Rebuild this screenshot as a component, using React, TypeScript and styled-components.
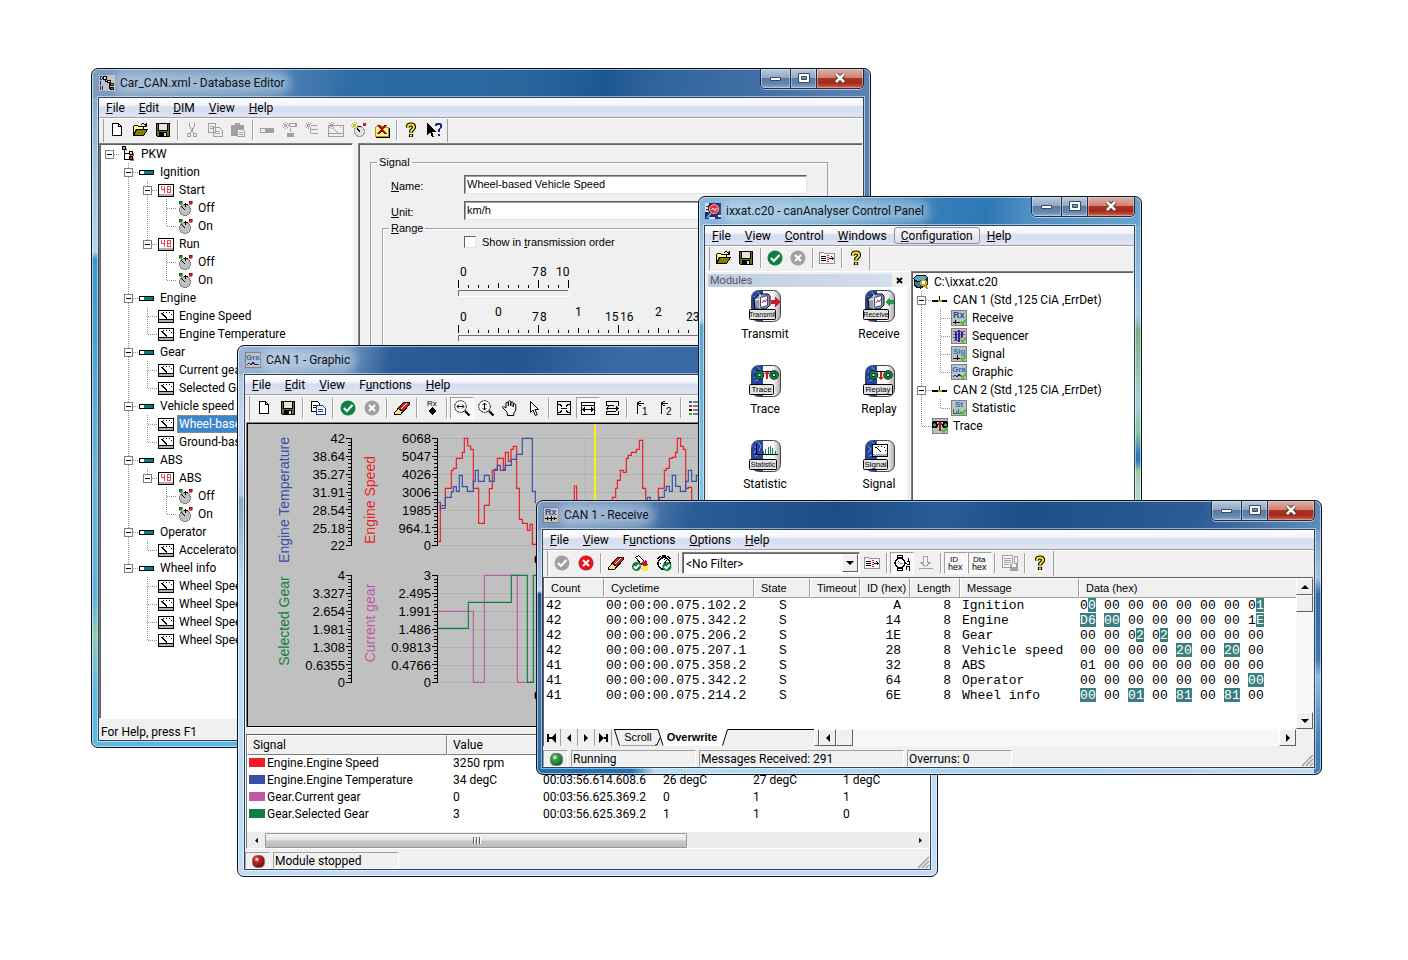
import React from 'react';
import styled, { createGlobalStyle, css } from 'styled-components';

const UI = 'Roboto, "Open Sans", sans-serif';
const SANS = '"Liberation Sans", Arial, sans-serif';
const MONO = '"Liberation Mono", "Courier New", monospace';

const GlobalStyle = createGlobalStyle`
  *, *::before, *::after { box-sizing: border-box; }
  body { margin: 0; background: #fff; color: #000; font: 12px/16px ${UI}; }
  button, input, select { font: inherit; color: inherit; }
  svg { display: block; flex: none; }
`;

/* ---------- Desktop and windows ---------- */

const Desktop = styled.main`
  position: relative;
  min-height: 100vh;
  overflow: hidden;
`;

interface Skin { title: string; left: string; right: string; bottom: string }
interface Place { x: number; y: number; w: number; h: number; edge?: number }

const Frame = styled.section<{ $place: Place; $skin: Skin }>`
  position: absolute;
  left: ${p => p.$place.x}px;
  top: ${p => p.$place.y}px;
  width: ${p => p.$place.w}px;
  height: ${p => p.$place.h}px;
  display: flex;
  flex-direction: column;
  padding: 0 6px 6px ${p => p.$place.edge || 6}px;
  overflow: hidden;
  border: 1px solid #0c1622;
  border-radius: 7px;
  background:
    ${p => p.$skin.title} 0 0 / 100% 29px no-repeat,
    ${p => p.$skin.left} 0 0 / 7px 100% no-repeat,
    ${p => p.$skin.right} 100% 0 / 7px 100% no-repeat,
    ${p => p.$skin.bottom};
  box-shadow: inset 0 0 0 1px rgba(255, 255, 255, 0.55);
`;

const TitleBar = styled.header`
  display: flex;
  flex: none;
  align-items: center;
  gap: 5px;
  height: 28px;
  padding-left: 1px;
`;

const TitleText = styled.h2`
  margin: 0;
  font-size: 12px;
  font-weight: 400;
  line-height: 12px;
  white-space: nowrap;
  color: #0a1420;
  border-radius: 6px;
  background: rgba(255, 255, 255, 0.36);
  box-shadow: 0 0 10px 6px rgba(255, 255, 255, 0.36);
`;

const Captions = styled.div`
  display: flex;
  align-self: flex-start;
  height: 20px;
  margin-left: auto;
  border: 1px solid #1d2f45;
  border-top: 0;
  border-radius: 0 0 5px 5px;
  box-shadow: 0 1px 0 rgba(255, 255, 255, 0.55);
  overflow: hidden;
`;

const CaptionButton = styled.button<{ $w: number; $close?: boolean }>`
  display: flex;
  align-items: center;
  justify-content: center;
  width: ${p => p.$w}px;
  padding: 0 0 2px;
  border: 0;
  border-left: ${p => (p.$w === 29 ? 0 : 1)}px solid #1d2f45;
  background: ${p => p.$close
    ? 'linear-gradient(#dcb0a8 0, #cf8577 45%, #b5301c 50%, #a32b20 75%, #d2684c 100%)'
    : 'linear-gradient(#b9c9dc 0, #8fa9c6 45%, #587ba4 50%, #6487af 80%, #8cb0d2 100%)'};
  box-shadow: inset 0 0 0 1px rgba(255, 255, 255, 0.35);
`;

const Client = styled.div`
  display: flex;
  flex: 1;
  flex-direction: column;
  min-height: 0;
  border: 1px solid #2f4458;
  box-shadow: 0 0 0 1px rgba(255, 255, 255, 0.5);
  background: #f0f0f0;
`;

const MenuBar = styled.nav`
  display: flex;
  flex: none;
  align-items: center;
  height: 20px;
  border-bottom: 1px solid #a0a0a0;
  background: linear-gradient(#fff 0, #f3f5fb 35%, #d5dcee 50%, #dfe4f4 100%);
`;

const MenuItem = styled.button<{ $hot?: boolean }>`
  height: 17px;
  padding: 1px 6px 0;
  border: 1px solid ${p => (p.$hot ? '#8a919e' : 'transparent')};
  border-radius: 3px;
  background: ${p => (p.$hot ? 'linear-gradient(#f6f7fb, #dcdfe9)' : 'none')};
  font-size: 12px;
  line-height: 15px;
`;

const ToolRow = styled.div<{ $h: number }>`
  display: flex;
  flex: none;
  height: ${p => p.$h}px;
  padding: 0 0 1px 4px;
  border-top: 1px solid #fff;
`;

const ToolGroup = styled.div`
  display: flex;
  align-items: center;
  padding: 0 1px 1px 2px;
  border-left: 1px solid #a0a0a0;
  border-right: 1px solid #a0a0a0;
`;

const ToolButton = styled.button<{ $w: number; $pressed?: boolean }>`
  display: flex;
  flex: none;
  align-items: center;
  justify-content: center;
  width: ${p => p.$w}px;
  height: 22px;
  padding: 0 1px 0 0;
  border: 1px solid transparent;
  background: none;
  ${p => p.$pressed && css`
    border-color: #a0a0a0 #fff #fff #a0a0a0;
    background: #f7f7f7;
  `}
`;

const Separator = styled.i`
  flex: none;
  width: 6px;
  height: 20px;
  border-left: 2px solid transparent;
  background: linear-gradient(90deg, #a0a0a0 50%, #fff 50%) 0 0 / 2px 100% no-repeat;
`;

const StatusBar = styled.footer<{ $h: number }>`
  display: flex;
  flex: none;
  align-items: flex-end;
  gap: 3px;
  height: ${p => p.$h}px;
`;

const StatusPane = styled.div<{ $w: number }>`
  display: flex;
  flex: none;
  align-items: center;
  width: ${p => p.$w}px;
  height: 17px;
  padding: 1px 0 0 1px;
  border: 1px solid;
  border-color: #a0a0a0 #fff #fff #a0a0a0;
  line-height: 14px;
  white-space: nowrap;
`;

const Lamp = styled.span<{ $color: string; $dark: string }>`
  width: 13px;
  height: 13px;
  margin-left: 5px;
  border: 1px solid #777;
  border-radius: 5px;
  background: radial-gradient(circle at 35% 30%, #fff 0, ${p => p.$color} 25%, ${p => p.$dark} 85%);
`;

const GripHolder = styled.span`
  margin-left: auto;
`;

/* ---------- Icons ---------- */

const gray = '#a0a0a0';
const Badge = ({ children }: { children: React.ReactNode }) => (
  <>
    <rect x=".5" y=".5" width="15" height="15" fill="#c0c0c0" stroke="#808080" />
    {children}
  </>
);
const Tick = ({ x = 0, y = 0 }) => (
  <path d={`M${x + 10} ${y + 12}l2 2 3-5`} fill="none" stroke="#4fc02c" strokeWidth="2" />
);
const Disc = ({ fill, cross, cx = 8, cy = 8, r = 7.5 }: { fill: string; cross?: boolean; cx?: number; cy?: number; r?: number }) => (
  <g shapeRendering="auto">
    <circle cx={cx} cy={cy} r={r} fill={fill} />
    {cross
      ? <path d={`M${cx - r * 0.4} ${cy - r * 0.4}l${r * 0.8} ${r * 0.8}m0 ${-r * 0.8}l${-r * 0.8} ${r * 0.8}`} stroke="#fff" strokeWidth="2" />
      : <path d={`M${cx - r * 0.55} ${cy}l${r * 0.4} ${r * 0.4} ${r * 0.75} ${-r * 0.8}`} fill="none" stroke="#fff" strokeWidth="2" />}
  </g>
);
const Eraser = () => (
  <g>
    <path d="M.500 12.500l9-10h6v2l-9 10h-6z" fill="#e0201c" stroke="#000" />
    <path d="M.500 12.500l4-4 4 3-2 3h-6z" fill="#ffe27a" stroke="#000" />
    <path d="M7 9l6-6" stroke="#fff" />
  </g>
);
const Glass = ({ vertical }: { vertical?: boolean }) => (
  <g fill="none" stroke="#000" shapeRendering="auto">
    <circle cx="6.500" cy="6.500" r="5.800" fill="#fff" strokeDasharray="2 .6" />
    <path d="M11 11l4.500 4.500" strokeWidth="2.200" />
    {vertical
      ? <path d="M6.500 3v7M4.500 5l2-2 2 2M4.500 8l2 2 2-2" />
      : <path d="M3 6.500h7M5 4.500l-2 2 2 2M8 4.500l2 2-2 2" />}
  </g>
);
const Spark = ({ x, y, c }: { x: number; y: number; c: string }) => (
  <path d={`M${x} ${y + 3.5}h7M${x + 3.5} ${y}v7M${x + 1} ${y + 1}l5 5m0-5l-5 5`} stroke={c} strokeDasharray="1 1" />
);
const smallText = { fontFamily: 'Liberation Sans', fontWeight: 700, shapeRendering: 'auto' } as const;
const hexText = { fontFamily: 'Liberation Sans', fontWeight: 400, shapeRendering: 'auto' } as const;

const ICONS: Record<string, React.ReactNode> = {
  new: <path d="M3.500 1.500h6l3 3v9h-9zM9.500 1.500v3h3" fill="#fff" stroke="#000" />,
  open: (
    <g stroke="#000">
      <path d="M1.500 13.500v-9l1-1h3l1 1h5v3" fill="#ffff7a" />
      <path d="M1.500 13.500l3-6h11l-4 6z" fill="#808000" />
      <path d="M9 2.500q3-2 5 1M14.500 1v3h-3" fill="none" />
    </g>
  ),
  save: (
    <g>
      <path d="M1.500 1.500h13v13h-12l-1-1z" fill="#6b6b1d" stroke="#000" />
      <path d="M4 2h8v6H4z" fill="#e4e4e4" />
      <path d="M3.500 1.500v6.500h9v-6.500" fill="none" stroke="#000" />
      <path d="M4 10h8v5H4z" />
      <path d="M9 11h2v3H9z" fill="#ddd" />
    </g>
  ),
  cut: <path d="M5.500 1v3l4 7M10.500 1v3l-4 7M3.500 11.500h3v3h-3zM9.500 11.500h3v3h-3z" fill="none" stroke={gray} />,
  copyOff: <path d="M1.500 1.500h7v9h-7zM3 4.500h4M3 6.500h4M6.500 5.500h6l3 3v6h-9zM8 9.500h5M8 11.500h5" fill="#f0f0f0" stroke={gray} />,
  copy: (
    <g>
      <path d="M1.500 1.500h6l2 2v8h-8zM3 5.500h4M3 7.500h4" fill="#fff" stroke="#000" />
      <path d="M6.500 5.500h6l3 3v6h-9zM8 9.500h5M8 11.500h5" fill="#fff" stroke="#1d3a8c" />
    </g>
  ),
  paste: (
    <g>
      <path d="M1 3h13v11H1zM5 1h5v2H5z" fill={gray} />
      <path d="M7.500 7.500h5l2 2v5h-7zM9 10.500h4M9 12.500h4" fill="#f0f0f0" stroke={gray} />
    </g>
  ),
  barOff: <g><path d="M1 6h14v5H1z" fill={gray} /><path d="M2 7h4v3H2z" fill="#f0f0f0" /></g>,
  addMux: <g><Spark x={0} y={0} c={gray} /><path d="M7 1h8v4H7zM5 11h7v4H5z" fill={gray} /><path d="M8 2h5v2H8z" fill="#f0f0f0" /><path d="M8.500 6v4" stroke={gray} /></g>,
  addList: <g><Spark x={0} y={0} c={gray} /><path d="M7 3.500h5M6 7.500h7M6 11.500h7M5.500 5v6" fill="none" stroke={gray} /></g>,
  addSignal: <g><path d="M.500 3.500h15v11h-15zM1 11.500h14M5 6l5 5M12 5.500h1" fill="none" stroke={gray} /><Spark x={0} y={0} c={gray} /></g>,
  addValue: (
    <g>
      <circle cx="8.500" cy="9.500" r="5" fill="#e4e4e4" stroke="#a0a0a0" />
      <path d="M6 6l3 4M7 4.500h3" stroke="#000" fill="none" />
      <path d="M12 1h3v3h-3z" fill="#d0201c" />
      <Spark x={0} y={0} c="#c9b800" />
    </g>
  ),
  remove: (
    <g>
      <path d="M1.500 5.500l2-2h4l1 2h6v9h-13z" fill="#fff38c" stroke="#a89a2a" />
      <path d="M2 15.500h13.500V6" fill="none" stroke="#000" />
      <path d="M4 3l8 9M12 3l-8 9" stroke="#9c1010" strokeWidth="2" />
    </g>
  ),
  help: (
    <g shapeRendering="auto">
      <path d="M5 5.500V4.500Q5 2.500 8 2.500T11 5Q11 6.500 9.500 7.500T8 10.500M8 12v3" fill="none" stroke="#000" strokeWidth="4.200" />
      <path d="M5 5.500V4.500Q5 2.500 8 2.500T11 5Q11 6.500 9.500 7.500T8 10M8 12.500v2" fill="none" stroke="#ffec00" strokeWidth="2" />
    </g>
  ),
  whatsThis: (
    <g>
      <path d="M1 1v12l3-3 2 5h2l-2-5h4z" />
      <path d="M9.500 4V3l1.500-1.500h3L15 3v2.500L12.500 8v2M12.500 11.500v2" fill="none" stroke="#20208a" strokeWidth="2" />
    </g>
  ),
  ok: <Disc fill="#138040" />,
  okOff: <Disc fill={gray} />,
  stop: <Disc fill="#e3171b" cross />,
  stopOff: <Disc fill={gray} cross />,
  eraser: <Eraser />,
  eraserOk: (
    <g>
      <path d="M3.500 2.500l3-2 6 6-3 3z" fill="#fff" stroke="#000" />
      <path d="M9 8l5-3 2 5-4 2z" fill="#c81414" />
      <path d="M10 11h6v5h-6z" fill="#ffe94a" />
      <Disc fill="#138040" cx={4.5} cy={11.5} r={4.5} />
    </g>
  ),
  clockOk: (
    <g>
      <circle cx="8" cy="8.500" r="6" fill="#fff" stroke="#000" strokeWidth="1.500" />
      <path d="M6 1h4M8 1v2M1.500 4l3-3M14.500 4l-3-3" stroke="#000" strokeWidth="2" />
      <path d="M8 9l3-4M4 8.500h1M8.500 4v1" stroke="#000" />
      <Disc fill="#138040" cx={11} cy={11.5} r={4.5} />
    </g>
  ),
  rxDot: (
    <g>
      <text x="3" y="6" fontSize="8" {...hexText}>Rx</text>
      <path d="M8 7l4 4-4 4-4-4z" />
    </g>
  ),
  zoomX: <Glass />,
  zoomY: <Glass vertical />,
  hand: <path shapeRendering="auto" d="M4.500 11.500l-4-4q0-2 3.500.5V3q1.200-1.600 2.400 0V6 1.500q1.200-1.500 2.400 0V6 2.500q1.200-1.500 2.400 0V7 4.500q1.600-1.200 2.600 0v5.500l-2 3v2.500h-6.500v-2z" fill="#fff" stroke="#000" />,
  pointer: <path shapeRendering="auto" d="M4.500 1.500v11l2.500-2.500 2.300 5.500 2-.8-2.300-5.200h3.500z" fill="#fff" stroke="#000" />,
  fitOut: (
    <g fill="none" stroke="#000">
      <path d="M1.500 1.500h13v13h-13zM5 8.500h6" />
      <path d="M2 4.500h2l2 2M14 4.500h-2l-2 2M2 12.500h2l2-2M14 12.500h-2l-2-2" />
    </g>
  ),
  fitX: <g fill="none" stroke="#000"><path d="M1.500 2.500h13v12h-13zM1.500 5.500h13" /><path d="M3 9.500h10M5 7.500l-2 2 2 2M11 7.500l2 2-2 2" /></g>,
  fitOpen: <g fill="none" stroke="#000"><path d="M2.500 5V1.500h12v4M2.500 11v3.500h12v-4M2 5.500h8M3 11.500h9M2 8.500h12M4.500 6.500l-2 2 2 2M12 6.500l2 2-2 2" /></g>,
  mark1: <g><path d="M3.500 2v12M4 3.500h6M6.500 1l-3 2.500 3 2.500" fill="none" stroke="#000" /><text x="8" y="15" fontSize="10" {...hexText}>1</text></g>,
  mark2: <g><path d="M3.500 2v12M4 3.500h6M6.500 1l-3 2.500 3 2.500" fill="none" stroke="#000" /><text x="8" y="15" fontSize="10" {...hexText}>2</text></g>,
  legend: (
    <g>
      <path d="M1 1h3v2H1z" fill="#2b5fc0" /><path d="M1 5h3v2H1z" fill="#e0201c" /><path d="M1 9h3v2H1z" /><path d="M1 13h3v2H1z" fill="#46a82c" />
      <path d="M5 2h10M5 6h10M5 10h10M5 14h10" stroke="#808080" strokeWidth="2" />
    </g>
  ),
  filter: (
    <g>
      <path d="M.500 13.500v-11h4l1 1h10v10z" fill="#f6f6f6" stroke="#909090" />
      <path d="M2 6.500h5M2 8.500h5M2 10.500h5M10 8.500h5M12.500 6.500l2 2-2 2" fill="none" stroke="#000" />
      <path d="M8.500 5v7" stroke="#e0201c" strokeWidth="2" strokeDasharray="1 1" />
    </g>
  ),
  watch: (
    <g>
      <path d="M3.500.500h5v2h-5zM3.500 13.500h5v2h-5z" fill="#fff" stroke="#000" />
      <circle cx="6" cy="8" r="5" fill="#fff" stroke="#000" strokeWidth="1.500" />
      <path d="M4 6l2 2h3" fill="none" stroke="#2b9fb8" />
      <path d="M11 8.500h2M14.500 3v3M12.500 6.500h3v3h-3M12.500 15v-3.500h3v4" fill="none" stroke="#000" />
    </g>
  ),
  download: <path d="M5.500 1.500h4v6h3l-5 4-5-4h3zM1 13.500h14" fill="#f6f6f6" stroke={gray} />,
  idHex: <g><text x="2" y="7" fontSize="8" {...hexText}>ID</text><text x="0" y="15" fontSize="9" {...hexText}>hex</text></g>,
  dataHex: <g><text x="1" y="7" fontSize="8" {...hexText}>Dta</text><text x="0" y="15" fontSize="9" {...hexText}>hex</text></g>,
  logOff: <g><path d="M.500.500h10v12h-10zM2 3.500h7M2 5.500h7M2 7.500h7M2 9.500h5M12.500 1.500h3v7h-3z" fill="#f6f6f6" stroke={gray} /><path d="M8 9h8v7H8z" fill={gray} /><path d="M10 9h4v3h-4z" fill="#f6f6f6" /></g>,

  /* tree */
  project: (
    <g>
      <path d="M4.500 3v10h5M5 7.500h4" fill="none" stroke="#000" />
      <path d="M2.500.500h3v3h-3z" fill="#40c8c8" stroke="#000" />
      <path d="M9.500 5.500h3v3h-3z" fill="#ffe94a" stroke="#000" />
      <path d="M9.500 10.500h3v3h-3z" fill="#e0201c" stroke="#000" />
      <path d="M6.500 2v3M13.500 7v3M13.500 12v3M10 9.500h3M10 14.500h3" stroke="#808080" />
    </g>
  ),
  bar: <g><path d="M.500 6.500h14v4H.500z" fill="#008080" stroke="#000" /><path d="M1 7h4v3H1z" fill="#fff" /></g>,
  digits: (
    <g>
      <path d="M.500 2.500h15v12h-15z" fill="#fff" stroke="#000" />
      <path d="M1 12h14v2H1z" fill="#b0b0b0" />
      <path d="M3.500 4v3h3M6.500 4v7M9.500 4.500h3v3h-3zM9.500 7.500v3h3v-3" fill="none" stroke="#ee4a46" />
    </g>
  ),
  meter: (
    <g>
      <path d="M.500 2.500h15v12h-15z" fill="#fff" stroke="#000" />
      <path d="M1 12h14v2H1z" fill="#b0b0b0" />
      <path d="M1 11.500h14" stroke="#000" />
      <path d="M4 5.500l5 5" stroke="#000" />
      <path d="M3 5.500h1M5 4.500h1M8 4.500h1M11 4.500h1M13 6.500h1" stroke="#000" />
    </g>
  ),
  knob: (
    <g>
      <circle cx="8" cy="10" r="5.500" fill="#c0c0c0" stroke="#808080" />
      <path d="M4 6l4 4M7 4.500h4M8.500 3v4" stroke="#000" strokeWidth="1.300" />
      <path d="M2 1h3v3H2z" fill="#2c8a1c" stroke="#103c08" strokeWidth=".5" />
      <path d="M12 1h3v3h-3z" fill="#d0201c" stroke="#500" strokeWidth=".5" />
    </g>
  ),
  disk: (
    <g>
      <ellipse cx="8" cy="4.500" rx="7" ry="3.500" fill="#58a8c8" stroke="#000" />
      <path d="M1.500 5v6q2 3 6 3V8Q3 8 1.500 5z" fill="#2d7a9c" stroke="#000" />
      <path d="M7 6l8-2v6l-3 3-5 1z" fill="#1d2a6e" />
      <circle cx="10.500" cy="8.500" r="2.500" fill="#fff" stroke="#c8a800" strokeWidth="2" />
      <path d="M11 11l4 4" stroke="#c8a800" strokeWidth="2" />
    </g>
  ),
  bus: <g><path d="M0 9h15" stroke="#000" strokeWidth="2" /><path d="M7.500 4v6" stroke="#000" /><path d="M6 8h4v2H6z" fill="#b0a800" /></g>,
  rx: <Badge><text x="2" y="8" fontSize="9" fill="#1d4fa0" {...smallText}>Rx</text><path d="M2 11.500h12M4.500 10v3M8 9v5M11.500 10v3" stroke="#000" /></Badge>,
  rxTick: <Badge><text x="2" y="8" fontSize="9" fill="#1d4fa0" {...smallText}>Rx</text><path d="M2 12.500h8M4.500 10v4" stroke="#000" /><Tick /></Badge>,
  seqTick: <Badge><path d="M2 3.500h12M2 6.500h12M2 9.500h10M3 12.500h6" stroke="#a02ca0" /><path d="M8 2v12M5 4v8M11 4v5" stroke="#20308c" strokeWidth="2" /><Tick /></Badge>,
  sigTick: <Badge><text x="2" y="8" fontSize="8" fill="#1d6fc0" {...smallText}>Sig</text><path d="M2 12.500h8M6.500 9v5" stroke="#000" /><Tick /></Badge>,
  graTick: <Badge><text x="1" y="8" fontSize="8" fill="#1d6fc0" {...smallText}>Gra</text><path d="M2 13l2-2 2 2 2-3 2 3" fill="none" stroke="#20208a" /><Tick /></Badge>,
  gra: <Badge><text x="1" y="8" fontSize="8" fill="#1d6fc0" {...smallText}>Gra</text><path d="M2 13l2-2 2 2 2-3 2 3 2-1 2 1" fill="none" stroke="#20208a" /></Badge>,
  stTick: <Badge><text x="4" y="7" fontSize="8" fill="#1d6fc0" {...smallText}>St</text><path d="M2.500 9v4.500H10M5.500 11v3M7.500 9v5" fill="none" stroke="#138040" /><Tick /></Badge>,
  traceTick: <Badge><path d="M1 3.500h14" stroke="#000" /><circle cx="2.500" cy="7" r="2.500" fill="#40a060" stroke="#000" strokeWidth="1.500" /><circle cx="13.500" cy="7" r="2.500" fill="#40a060" stroke="#000" strokeWidth="1.500" /><path d="M8 4v9M6 6h4" stroke="#a01414" strokeWidth="2" /><Tick /></Badge>,
  dim: (
    <g>
      <path d="M0 0h16v16H0z" fill="#c0c0c0" />
      <path d="M1 1.500h2M1.500 2v2M3.500 2v2M1 4.500h2M1.500 6v4M1.500 11v4M3.500 11v4" stroke="#20308c" fill="none" />
      <path d="M6.500 3v3h4v7h2" fill="none" stroke="#000" />
      <path d="M4.500 1.500h3v3h-3zM8.500 5.500h3v2h-3z" fill="#fff38c" stroke="#000" />
      <path d="M11.500 8.500h3v2h-3z" fill="#40c840" stroke="#000" /><path d="M11.500 12.500h3v2h-3z" fill="#e0201c" stroke="#000" />
    </g>
  ),
  analyser: (
    <g>
      <path d="M0 0h16v16H0z" fill="#1d2a6e" />
      <path d="M0 0h4v9H0zM4 14h6v2H4zM13 12h3v2h-3z" fill="#d8e0ee" />
      <path d="M1 3.500h4M1 6.500h4M3 2v6" stroke="#333" />
      <g shapeRendering="auto">
        <circle cx="9" cy="6" r="4.500" fill="#e83030" stroke="#f8b0b0" />
        <path d="M6.500 7l1.500-2 2 2.500 1.500-2.500" fill="none" stroke="#fff" />
        <path d="M6 10l-4 5" stroke="#70a8e0" strokeWidth="2" />
      </g>
    </g>
  ),
};

const Icon = ({ name }: { name: string }) => (
  <svg width="16" height="16" viewBox="0 0 16 16" shapeRendering="crispEdges" aria-hidden="true">{ICONS[name]}</svg>
);

const Grip = () => (
  <GripHolder>
    <svg width="14" height="14" viewBox="0 0 14 14" aria-hidden="true">
      <path d="M2 13L13 2M6 13l7-7M10 13l3-3" stroke="#a0a0a0" strokeWidth="1.500" />
    </svg>
  </GripHolder>
);

const Arrow = ({ dir }: { dir: 'left' | 'right' | 'up' | 'down' | 'first' | 'last' }) => {
  const d = {
    left: 'M7 1v8L3 5z', right: 'M3 1v8l4-4z', up: 'M1 7h8L5 3z', down: 'M1 3h8L5 7z',
    first: 'M9 0v10L4 5zM0 1h2v8H0zM2 4h3v2H2z', last: 'M1 0v10l5-5zM8 1h2v8H8zM5 4h3v2H5z',
  }[dir];
  return <svg width="10" height="10" viewBox="0 0 10 10" aria-hidden="true"><path d={d} /></svg>;
};

/* ---------- Window chrome components ---------- */

const Mnemonic = ({ text }: { text: string }) => {
  const i = text.indexOf('&');
  if (i < 0) return <>{text}</>;
  return <>{text.slice(0, i)}<u>{text[i + 1]}</u>{text.slice(i + 2)}</>;
};

interface WindowProps { place: Place; skin: Skin; icon: string; title: string; buttons?: boolean; children: React.ReactNode }

const AppWindow = ({ place, skin, icon, title, buttons = true, children }: WindowProps) => (
  <Frame $place={place} $skin={skin} aria-label={title}>
    <TitleBar>
      <Icon name={icon} />
      <TitleText>{title}</TitleText>
      {buttons && (
        <Captions>
          <CaptionButton $w={29} aria-label="Minimize">
            <svg width="13" height="9" viewBox="0 0 13 9"><path d="M1.500 4.500h10v3h-10z" fill="#fff" stroke="#3c4a5c" /></svg>
          </CaptionButton>
          <CaptionButton $w={26} aria-label="Maximize">
            <svg width="12" height="10" viewBox="0 0 12 10"><path d="M.500.500h11v9H.500zM3.500 3.500h5v3h-5z" fill="#fff" stroke="#3c4a5c" fillRule="evenodd" /></svg>
          </CaptionButton>
          <CaptionButton $w={47} $close aria-label="Close">
            <svg width="12" height="10" viewBox="0 0 12 10"><path d="M2 1l8 8M10 1L2 9" stroke="#4a3038" strokeWidth="4.500" /><path d="M2 1l8 8M10 1L2 9" stroke="#fff" strokeWidth="2.500" /></svg>
          </CaptionButton>
        </Captions>
      )}
    </TitleBar>
    <Client>{children}</Client>
  </Frame>
);

const Menu = ({ items, hot }: { items: string[]; hot?: string }) => (
  <MenuBar>
    {items.map(t => <MenuItem key={t} $hot={t === hot}><Mnemonic text={t} /></MenuItem>)}
  </MenuBar>
);

/* A tool list is a string of icon names; "|" is a separator and "!" marks a pressed button. */
const Tools = ({ list, w = 24 }: { list: string; w?: number }) => (
  <>
    {list.split(' ').map((t, i) => t === '|'
      ? <Separator key={i} />
      : <ToolButton key={i} $w={w} $pressed={t[0] === '!'} aria-label={t.replace('!', '')}><Icon name={t.replace('!', '')} /></ToolButton>)}
  </>
);

/* ---------- Tree ---------- */

const Tree = styled.ul`
  margin: 0;
  padding: 0;
  list-style: none;
`;

const TreeRow = styled.li`
  display: flex;
  height: 18px;
`;

const dotsV = 'repeating-linear-gradient(#909090 0 1px, transparent 1px 2px)';
const dotsH = 'repeating-linear-gradient(90deg, #909090 0 1px, transparent 1px 2px)';
const guideStyles: Record<string, string> = {
  '|': `${dotsV} 8px 0 / 1px 100% no-repeat`,
  T: `${dotsV} 8px 0 / 1px 100% no-repeat, ${dotsH} 9px 9px / 10px 1px no-repeat`,
  L: `${dotsV} 8px 0 / 1px 9px no-repeat, ${dotsH} 9px 9px / 10px 1px no-repeat`,
  r: `${dotsH} 9px 9px / 10px 1px no-repeat`,
};

const Guide = styled.span<{ $kind: string }>`
  flex: none;
  width: 19px;
  padding: 5px 0 0 4px;
  background: ${p => guideStyles[p.$kind] || 'none'};
`;

const Expander = styled.button`
  display: block;
  width: 9px;
  height: 9px;
  padding: 0;
  border: 1px solid #808080;
  background: linear-gradient(#000, #000) 1px 3px / 5px 1px no-repeat #fff;
`;

const TreeIcon = styled.span`
  flex: none;
  width: 19px;
  padding-top: 1px;
`;

const TreeLabel = styled.span<{ $selected?: boolean }>`
  padding: 0 2px;
  line-height: 18px;
  white-space: nowrap;
  ${p => p.$selected && css`
    color: #fff;
    background: #3d86cc;
    outline: 1px dotted #e8862c;
    outline-offset: -1px;
  `}
`;

type Node = [guides: string, icon: string, label: string];

const TreeView = ({ nodes, selected }: { nodes: Node[]; selected?: string }) => (
  <Tree>
    {nodes.map(([guides, icon, label], i) => {
      const open = guides.endsWith('+');
      const kinds = guides.replace('+', '').split('');
      return (
        <TreeRow key={i}>
          {kinds.map((k, j) => (
            <Guide key={j} $kind={k}>{open && j === kinds.length - 1 && <Expander aria-label="Collapse" />}</Guide>
          ))}
          <TreeIcon><Icon name={icon} /></TreeIcon>
          <TreeLabel $selected={label === selected}>{label}</TreeLabel>
        </TreeRow>
      );
    })}
  </Tree>
);

/* ---------- Database Editor ---------- */

const DB_NODES: Node[] = [
  ['r+', 'project', 'PKW'],
  [' T+', 'bar', 'Ignition'],
  [' |T+', 'digits', 'Start'],
  [' ||T', 'knob', 'Off'],
  [' ||L', 'knob', 'On'],
  [' |L+', 'digits', 'Run'],
  [' | T', 'knob', 'Off'],
  [' | L', 'knob', 'On'],
  [' T+', 'bar', 'Engine'],
  [' |T', 'meter', 'Engine Speed'],
  [' |L', 'meter', 'Engine Temperature'],
  [' T+', 'bar', 'Gear'],
  [' |T', 'meter', 'Current gear'],
  [' |L', 'meter', 'Selected Gear'],
  [' T+', 'bar', 'Vehicle speed'],
  [' |T', 'meter', 'Wheel-based Vehicle Speed'],
  [' |L', 'meter', 'Ground-based Speed'],
  [' T+', 'bar', 'ABS'],
  [' |L+', 'digits', 'ABS'],
  [' | T', 'knob', 'Off'],
  [' | L', 'knob', 'On'],
  [' T+', 'bar', 'Operator'],
  [' |L', 'meter', 'Accelerator'],
  [' L+', 'bar', 'Wheel info'],
  ['  T', 'meter', 'Wheel Speed'],
  ['  T', 'meter', 'Wheel Speed'],
  ['  T', 'meter', 'Wheel Speed'],
  ['  L', 'meter', 'Wheel Speed'],
];

const Split = styled.div`
  display: flex;
  flex: 1;
  min-height: 0;
`;

const sunken = css`
  border: 1px solid;
  border-color: #808080 #fff #fff #808080;
  box-shadow: inset 1px 1px 0 #606060;
`;

const TreePane = styled.div<{ $w?: number }>`
  flex: ${p => (p.$w ? 'none' : 1)};
  width: ${p => (p.$w ? `${p.$w}px` : 'auto')};
  padding: 1px 0 0 1px;
  overflow: hidden;
  background: #fff;
  ${sunken}
`;

const FormPane = styled.form`
  flex: 1;
  margin: 0 0 0 5px;
  padding: 11px 34px 0 11px;
  overflow: hidden;
  font: 11px/14px ${SANS};
  ${sunken}
`;

const Group = styled.fieldset<{ $nested?: boolean }>`
  min-width: 0;
  height: ${p => (p.$nested ? 'auto' : '520px')};
  margin: ${p => (p.$nested ? '0 0 0 5px' : '0')};
  padding: ${p => (p.$nested ? '0 6px' : '2px 6px 0')};
  border: 1px solid #a0a0a0;
  box-shadow: inset 1px 1px 0 #fff;

  legend { padding: 0 2px; line-height: 14px; }
`;

const Fields = styled.div`
  height: 50px;
`;

const Field = styled.div`
  display: grid;
  grid-template-columns: 73px 343px;
  align-items: center;
  height: 26px;
  padding-left: 14px;

  label { padding-top: 3px; }
`;

const TextBox = styled.input`
  width: 100%;
  height: 19px;
  padding: 0 2px;
  border: 1px solid;
  border-color: #606060 #e3e3e3 #e3e3e3 #606060;
  box-shadow: inset 1px 1px 0 #a0a0a0;
  background: #fff;
`;

const CheckRow = styled.label`
  display: flex;
  align-items: center;
  gap: 6px;
  height: 14px;
  padding-left: 75px;
`;

const CheckBox = styled.input`
  appearance: none;
  width: 12px;
  height: 12px;
  margin: 0;
  border: 1px solid;
  border-color: #606060 #e3e3e3 #e3e3e3 #606060;
  background: #fff;
`;

const range = (n: number) => Array.from({ length: n }, (_, i) => i);

const BitRuler = () => (
  <svg width="420" height="97" viewBox="389 249 420 97" fontFamily="Roboto" fontSize="12" shapeRendering="crispEdges">
    {range(12).map(i => {
      const h = i === 0 || i === 8 || i === 11 ? 8 : i === 4 ? 5 : 3;
      return <path key={i} d={`M${458.5 + i * 10} 288v-${h}`} stroke="#000" />;
    })}
    {range(33).map(i => {
      const h = i % 8 === 0 ? 8 : i % 4 === 0 ? 5 : 3;
      return <path key={i} d={`M${458.5 + i * 10} 333v-${h}`} stroke="#000" />;
    })}
    <path d="M458.500 296v-5.500H568" fill="none" stroke="#707070" strokeWidth="1.500" />
    <path d="M459 296.500h110v-5" fill="none" stroke="#fff" />
    <path d="M458.500 341v-5.500H790" fill="none" stroke="#707070" strokeWidth="1.500" />
    <path d="M459 341.500h330v-5" fill="none" stroke="#fff" />
    <text x="460" y="276">0</text>
    <text x="532" y="276">7</text>
    <text x="540" y="276">8</text>
    <text x="556" y="276">10</text>
    <text x="460" y="321">0</text>
    <text x="532" y="321">7</text>
    <text x="540" y="321">8</text>
    <text x="605" y="321">15</text>
    <text x="620" y="321">16</text>
    <text x="686" y="321">23</text>
    <text x="495" y="316">0</text>
    <text x="575" y="316">1</text>
    <text x="655" y="316">2</text>
  </svg>
);

const StatusText = styled.span`
  padding: 0 2px;
  line-height: 16px;
`;

const DatabaseEditor = () => (
  <AppWindow
    place={{ x: 91, y: 68, w: 780, h: 680 }}
    icon="dim"
    title="Car_CAN.xml - Database Editor"
    skin={{
      title: 'linear-gradient(100deg, #7d9cc0 0, #5c8ab8 20%, #2c6ba5 34%, #2a679f 55%, #1d5791 66%, #2e649c 72%, #3f6ea4 84%, #5b83b2 100%)',
      left: 'linear-gradient(#7d9fc4 0, #9fc0dc 12%, #b4d4ea 27%, #3c96cc 28%, #6ab4de 60%, #5fb2dc 78%, #8fcdb8 83%, #5fb8e2 92%)',
      right: 'linear-gradient(#5b83b2, #4f7db0 30%, #5fb8e2)',
      bottom: '#5fb6e0',
    }}
  >
    <Menu items={['&File', '&Edit', '&DIM', '&View', '&Help']} />
    <ToolRow $h={25}>
      <ToolGroup>
        <Tools w={23} list="new open save | cut copyOff paste | barOff addMux addList addSignal addValue remove | help whatsThis" />
      </ToolGroup>
    </ToolRow>
    <Split>
      <TreePane $w={254}><TreeView nodes={DB_NODES} selected="Wheel-based Vehicle Speed" /></TreePane>
      <FormPane>
        <Group>
          <legend>Signal</legend>
          <Fields>
            <Field>
              <label htmlFor="name"><u>N</u>ame:</label>
              <TextBox id="name" defaultValue="Wheel-based Vehicle Speed" />
            </Field>
            <Field>
              <label htmlFor="unit"><u>U</u>nit:</label>
              <TextBox id="unit" defaultValue="km/h" />
            </Field>
          </Fields>
          <Group $nested>
            <legend><u>R</u>ange</legend>
            <CheckRow><CheckBox type="checkbox" /><span>Show in <u>t</u>ransmission order</span></CheckRow>
            <BitRuler />
          </Group>
        </Group>
      </FormPane>
    </Split>
    <StatusBar $h={21}><StatusText>For Help, press F1</StatusText></StatusBar>
  </AppWindow>
);

/* ---------- Graphic ---------- */

const ChartPane = styled.div`
  flex: 1;
  min-height: 0;
  margin: 0 1px 6px;
  overflow: hidden;
  border: 1px solid;
  border-color: #808080 #fff #fff #808080;
`;

const ChartArea = styled.div`
  height: 100%;
  overflow: hidden;
  border: 1px solid #000;
  background: #c0c0c0;
`;

const AXES = [
  { x: 351, y: 438, labels: ['42', '38.64', '35.27', '31.91', '28.54', '25.18', '22'] },
  { x: 437, y: 438, labels: ['6068', '5047', '4026', '3006', '1985', '964.1', '0'] },
  { x: 351, y: 575, labels: ['4', '3.327', '2.654', '1.981', '1.308', '0.6355', '0'] },
  { x: 437, y: 575, labels: ['3', '2.495', '1.991', '1.486', '0.9813', '0.4766', '0'] },
];

const CAPTIONS = [
  { x: 289, y: 500, color: '#3650a8', text: 'Engine Temperature' },
  { x: 375, y: 500, color: '#ee1c25', text: 'Engine Speed' },
  { x: 289, y: 621, color: '#0c8040', text: 'Selected Gear' },
  { x: 375, y: 623, color: '#c05aa4', text: 'Current gear' },
];

const majorY = (top: number, i: number) => top + Math.min(i * 18, 107);

const Chart = () => (
  <svg width="680" height="303" viewBox="248 424 680 303" fontFamily="Liberation Sans" shapeRendering="crispEdges">
    {[438, 575].map(top => range(7).map(i => (
      <path key={`${top}-${i}`} d={`M438 ${majorY(top, i) + 0.5}H928`} stroke="#b2b2b2" />
    )))}
    <path d="M585.500 438v107M585.500 575v107" stroke="#b2b2b2" />
    {AXES.map(a => (
      <g key={`${a.x}-${a.y}`}>
        <path d={`M${a.x + 0.5} ${a.y}v108`} stroke="#000" />
        {range(31).map(i => {
          const y = a.y + Math.round((i * 107) / 30) + 0.5;
          return <path key={i} d={`M${a.x} ${y}h-${i % 5 === 0 ? 5 : 3}`} stroke="#000" />;
        })}
        {a.labels.map((t, i) => (
          <text key={i} x={a.x - 6} y={majorY(a.y, i) + 5} fontSize="13" textAnchor="end">{t}</text>
        ))}
      </g>
    ))}
    {CAPTIONS.map(c => (
      <text key={c.text} transform={`translate(${c.x} ${c.y}) rotate(-90)`} fontSize="14" fill={c.color} textAnchor="middle">{c.text}</text>
    ))}
    <text x="534" y="564" fontSize="13" fontWeight="700">0</text>
    <text x="534" y="700" fontSize="13" fontWeight="700">0</text>
    <g fill="none" strokeWidth="3.500" shapeRendering="auto">
      <g transform="translate(380 340) scale(.33333)">
        <path stroke="#ee1c25" d="M173 605H181V497H196V445H214V391H220V385H229V355H247V337H253V295H263V318H272V328H280V445H296V550H313V496H328V446H337V391H352V355H370V388H376V337H385V364H393V328H400V319H410V445H418V538H427V550H442V571H450V553H457V613H470M583 490V438H590V490" />
        <path stroke="#3650a8" d="M173 487H181V505H196V472H214V455H220V440H229V454H238V406H247V440H262V454H280V424H286V391H295V424H313V406H328V424H343V388H352V376H361V391H376V376H394V358H409V343H427V295H457V454H466V490" />
      </g>
      <g transform="translate(530 420) scale(.33333)">
        <path stroke="#ee1c25" d="M247 250V232H257V205H262V181H271V151H280V157H289V115H295V106H304V97H319V88H328V61H338V205H347V250M385 250V205H403V151H409V145H418V115H427V112H437V97H442V55H452V79H460V88H467V205H475V202H485V250" />
        <path stroke="#3650a8" d="M352 250V232H361V250M388 250V232H403V211H409V199H418V214H427V166H437V199H451V214H467V184H475V151H485V184H499V166H510" />
      </g>
      <g transform="translate(235 540) scale(.33333)">
        <path stroke="#c05aa4" d="M608 214H715V427H748V106H847V427H895" />
        <path stroke="#0c8040" d="M608 265H700V187H829V106H877V427H895V106H915" />
      </g>
    </g>
    <path d="M595 424v123" stroke="#fff200" strokeWidth="2" />
  </svg>
);

const ListPane = styled.div`
  display: flex;
  flex: none;
  flex-direction: column;
  height: 115px;
  margin-left: 1px;
  background: #fff;
  border: 1px solid;
  border-color: #606060 #fff #fff #808080;
`;

const SignalTable = styled.table`
  width: 680px;
  table-layout: fixed;
  border-collapse: separate;
  border-spacing: 0;

  th {
    height: 20px;
    padding: 0 5px;
    border: 1px solid;
    border-color: #fff #808080 #808080 #fff;
    background: #f0f0f0;
    font-weight: 400;
    line-height: 16px;
    text-align: left;
  }
  td { height: 17px; padding: 0 6px; line-height: 17px; white-space: nowrap; }
  td:first-child { padding-left: 2px; }
`;

const Swatch = styled.span<{ $color: string }>`
  display: inline-block;
  width: 16px;
  height: 9px;
  margin-right: 2px;
  background: ${p => p.$color};
`;

const FlatScroll = styled.div`
  display: flex;
  align-items: center;
  height: 16px;
  margin-top: auto;
  background: #ececec;
`;

const FlatArrow = styled.button`
  display: flex;
  align-items: center;
  justify-content: center;
  width: 18px;
  height: 16px;
  padding: 0;
  border: 0;
  background: none;

  svg { width: 7px; height: 7px; }
`;

const FlatThumb = styled.span`
  display: flex;
  align-items: center;
  justify-content: center;
  gap: 2px;
  width: 422px;
  height: 15px;
  margin-right: auto;
  border: 1px solid #979797;
  border-radius: 1px;
  background: linear-gradient(#f4f4f4, #e4e4e6 48%, #c8c8cc 52%, #bcbcc0);

  i { width: 1px; height: 7px; background: #606060; box-shadow: 1px 0 0 #fff; }
`;

const SIGNALS = [
  ['#ee1c25', 'Engine.Engine Speed', '3250 rpm'],
  ['#3650a8', 'Engine.Engine Temperature', '34 degC', '00:03:56.614.608.6', '26 degC', '27 degC', '1 degC'],
  ['#c05aa4', 'Gear.Current gear', '0', '00:03:56.625.369.2', '0', '1', '1'],
  ['#0c8040', 'Gear.Selected Gear', '3', '00:03:56.625.369.2', '1', '1', '0'],
];

const Graphic = () => (
  <AppWindow
    place={{ x: 237, y: 345, w: 701, h: 532 }}
    icon="gra"
    title="CAN 1 - Graphic"
    buttons={false}
    skin={{
      title: 'linear-gradient(100deg, #9db8d6 0, #6d93bf 16%, #2c5d97 22%, #23558f 40%, #3a6ba5 55%, #2d619c 100%)',
      left: 'linear-gradient(#a9c2de 0, #c8dcf0 18%, #b4cbe4 28%, #8fa8c8 29%, #c2dcf4 45%)',
      right: 'linear-gradient(#2d619c, #c0dcf5 70%)',
      bottom: '#c0dcf5',
    }}
  >
    <Menu items={['&File', '&Edit', '&View', 'F&unctions', '&Help']} />
    <ToolRow $h={27}>
      <ToolGroup>
        <Tools list="new save | copy | ok stopOff | eraser | rxDot | !zoomX zoomY hand pointer | fitOut !fitX fitOpen | mark1 mark2 | legend" />
      </ToolGroup>
    </ToolRow>
    <ChartPane><ChartArea><Chart /></ChartArea></ChartPane>
    <ListPane>
      <SignalTable>
        <colgroup>
          <col width="200" /><col width="90" /><col width="120" /><col width="90" /><col width="90" /><col width="90" />
        </colgroup>
        <thead><tr><th>Signal</th><th>Value</th><th /><th /><th /><th /></tr></thead>
        <tbody>
          {SIGNALS.map(([color, name, ...cells]) => (
            <tr key={name}>
              <td><Swatch $color={color} />{name}</td>
              {cells.map((c, i) => <td key={i}>{c}</td>)}
            </tr>
          ))}
        </tbody>
      </SignalTable>
      <FlatScroll>
        <FlatArrow aria-label="Scroll left"><Arrow dir="left" /></FlatArrow>
        <FlatThumb><i /><i /><i /></FlatThumb>
        <FlatArrow aria-label="Scroll right"><Arrow dir="right" /></FlatArrow>
      </FlatScroll>
    </ListPane>
    <StatusBar $h={20}>
      <StatusPane $w={25}><Lamp $color="#d02028" $dark="#6e0810" /></StatusPane>
      <StatusPane $w={126}>Module stopped</StatusPane>
      <Grip />
    </StatusBar>
  </AppWindow>
);

/* ---------- Control Panel ---------- */

const CP_NODES: Node[] = [
  ['', 'disk', 'C:\\ixxat.c20'],
  ['T+', 'bus', 'CAN 1 (Std ,125 CiA ,ErrDet)'],
  ['|T', 'rxTick', 'Receive'],
  ['|T', 'seqTick', 'Sequencer'],
  ['|T', 'sigTick', 'Signal'],
  ['|L', 'graTick', 'Graphic'],
  ['T+', 'bus', 'CAN 2 (Std ,125 CiA ,ErrDet)'],
  ['|L', 'stTick', 'Statistic'],
  ['L', 'traceTick', 'Trace'],
];

const ModulePane = styled.div`
  display: flex;
  flex: none;
  flex-direction: column;
  width: 206px;
  padding: 2px 4px 0 3px;
  border-top: 1px solid #fff;
`;

const ModuleHead = styled.div`
  display: flex;
  flex: none;
  align-items: center;
  justify-content: space-between;
  height: 13px;
`;

const ModuleTitle = styled.h3`
  width: 184px;
  margin: 0;
  padding-left: 2px;
  background: linear-gradient(90deg, #bfcddd, #d3dfee);
  color: #4e5a68;
  font-size: 11px;
  font-weight: 400;
  line-height: 13px;
`;

const ModuleClose = styled.button`
  width: 15px;
  height: 13px;
  padding: 3px 4px;
  border: 0;
  background: none;
`;

const ModuleGrid = styled.div`
  display: grid;
  flex: 1;
  grid-template-columns: 114px 114px;
  grid-auto-rows: 75px;
  padding-top: 3px;
  overflow: hidden;
  background: #fff;
`;

const Module = styled.button`
  display: flex;
  flex-direction: column;
  align-items: center;
  gap: 4px;
  padding: 0;
  border: 0;
  background: none;
`;

const Monitor = () => (
  <g shapeRendering="auto">
    <path d="M5 9l6-5h8l2 2v9l-4 4H6z" fill="#9a9a9a" stroke="#000" />
    <path d="M11 4v5l-5 1M11 9v10" stroke="#fff" fill="none" />
    <path d="M11.500 7.500l7-2v10l-7 2z" fill="#fff" stroke="#2848b0" />
    <path d="M13 13l2-3 1 2 2-3" stroke="#e0201c" fill="none" />
  </g>
);
const Reels = ({ d }: { d: string }) => (
  <g shapeRendering="auto">
    <path d="M8 6.500h18" stroke="#000" />
    <circle cx="10.500" cy="10" r="3" fill="#c8e8c8" stroke="#000" strokeWidth="3.500" />
    <circle cx="25" cy="10" r="3" fill="#c8e8c8" stroke="#000" strokeWidth="3.500" />
    <circle cx="10.500" cy="10" r="3" fill="none" stroke="#0c8040" strokeWidth="2.200" />
    <circle cx="25" cy="10" r="3" fill="none" stroke="#0c8040" strokeWidth="2.200" />
    <path d={d} fill="#c81c1c" />
  </g>
);

const MODULES: { name: string; w: number; art: React.ReactNode }[] = [
  { name: 'Transmit', w: 26, art: <g><Monitor /><path d="M22 10h4V7l5 5-5 5v-3h-4z" fill="#c81c2c" /></g> },
  { name: 'Receive', w: 25, art: <g><Monitor /><path d="M31 10h-4V7l-5 5 5 5v-3h4z" fill="#1c9c40" /></g> },
  { name: 'Trace', w: 24, art: <Reels d="M17 14V9h-2l3-3 3 3h-2v5z" /> },
  { name: 'Replay', w: 29, art: <Reels d="M17 7v5h-2l3 3 3-3h-2V7z" /> },
  { name: 'Statistic', w: 27, art: <g><path d="M7.500 4v10M6 14.500H29" fill="none" stroke="#000" /><path d="M14.500 11v3M16.500 9v5M19.500 7v7M21.500 6v8M23.500 8v6M26.500 11v3" stroke="#0c8040" /></g> },
  { name: 'Signal', w: 24, art: <g><path d="M9.500 4.500h15v12h-15z" fill="#fff" stroke="#000" /><path d="M10 14h14v2H10z" fill="#b0b0b0" /><path d="M13 7l5 5M12 7.500h1M15 6.500h1M18 6.500h1M21 7.500h1M22 10.500h1" stroke="#000" /></g> },
];

const ModuleIcon = ({ name, w, art }: { name: string; w: number; art: React.ReactNode }) => (
  <svg width="32" height="32" viewBox="0 0 32 32" aria-hidden="true">
    <defs>
      <linearGradient id={`face-${name}`}><stop offset="0" stopColor="#fff" /><stop offset=".75" stopColor="#f8f8f8" /><stop offset="1" stopColor="#a8a8a8" /></linearGradient>
    </defs>
    <rect x="2.500" y=".500" width="29" height="31" rx="7" fill={`url(#face-${name})`} stroke="#444" />
    <path d="M14 1v30H9q-6 0-6-6V7q0-6 6-6z" fill="#2446a0" />
    <path d="M5 6l3 3-3 4M9 2l3 4-2 5M6 16l5-2M4 27l6 2" stroke="#7c9ce0" fill="none" />
    <g shapeRendering="crispEdges">{art}</g>
    <rect x=".500" y="19.500" width={w} height="10" rx="1" fill="#e4e4e4" stroke="#000" />
    <text x={w / 2 + 0.5} y="27" fontFamily="Liberation Sans" fontSize={name.length > 6 ? 7 : 8} textAnchor="middle">{name}</text>
  </svg>
);

const ControlPanel = () => (
  <AppWindow
    place={{ x: 698, y: 196, w: 444, h: 540, edge: 5 }}
    icon="analyser"
    title="ixxat.c20 - canAnalyser Control Panel"
    skin={{
      title: 'linear-gradient(100deg, #8ab8da 0, #6ea6d0 30%, #3a80ba 50%, #2e78b4 65%, #4f8fc4 74%, #6ba4d0 100%)',
      left: 'linear-gradient(#8ab8da 0, #a4c8e4 10%, #b4d4ea 23%, #5aa4d0 24%, #7cc4ea 50%)',
      right: 'linear-gradient(#6ba4d0 0, #9cc4e0 18%, #a8cce4 22%, #7caa8c 25%, #94c4ac 32%, #a8d0e0 38%, #8cc0a4 44%, #2a78c0 48%, #2a78c0 49%, #a4c8a8 51%, #b4d8dc 56%)',
      bottom: '#7cc0e6',
    }}
  >
    <Menu items={['&File', '&View', '&Control', '&Windows', '&Configuration', '&Help']} hot="&Configuration" />
    <ToolRow $h={25}>
      <ToolGroup>
        <Tools w={23} list="open save | ok stopOff | filter | help" />
      </ToolGroup>
    </ToolRow>
    <Split>
      <ModulePane>
        <ModuleHead>
          <ModuleTitle>Modules</ModuleTitle>
          <ModuleClose aria-label="Close modules">
            <svg width="7" height="7" viewBox="0 0 7 7"><path d="M1 1l5 5M6 1L1 6" stroke="#000" strokeWidth="2" /></svg>
          </ModuleClose>
        </ModuleHead>
        <ModuleGrid>
          {MODULES.map(m => <Module key={m.name}><ModuleIcon {...m} /><span>{m.name}</span></Module>)}
        </ModuleGrid>
      </ModulePane>
      <TreePane><TreeView nodes={CP_NODES} /></TreePane>
    </Split>
  </AppWindow>
);

/* ---------- Receive ---------- */

const Combo = styled.label`
  display: flex;
  flex: none;
  width: 178px;
  height: 22px;
  padding: 1px;
  background: #fff;
  ${sunken}
`;

const ComboSelect = styled.select`
  flex: 1;
  appearance: none;
  padding: 1px 2px 0;
  border: 0;
  background: none;
`;

const raised = css`
  display: flex;
  flex: none;
  align-items: center;
  justify-content: center;
  padding: 0;
  border: 1px solid;
  border-color: #fff #606060 #606060 #fff;
  background: #f0f0f0;
`;

const ComboArrow = styled.span`
  width: 16px;
  height: 18px;
  ${raised}
`;

const ScrollButton = styled.button`
  width: 17px;
  height: 17px;
  ${raised}
`;

const ReceivePane = styled.div`
  display: flex;
  flex: 1;
  flex-direction: column;
  min-height: 0;
  margin-right: 1px;
  border-top: 1px solid #606060;
  border-left: 1px solid #606060;
`;

const TableScroll = styled.div`
  flex: 1;
  overflow: hidden;
  background: #fff;
`;

const MessageTable = styled.table`
  width: 100%;
  table-layout: fixed;
  border-collapse: separate;
  border-spacing: 0;

  th {
    height: 20px;
    padding: 0 0 0 6px;
    border: 1px solid;
    border-color: #fff #a0a0a0 #a0a0a0 #fff;
    background: #f0f0f0;
    font: 400 11px/16px ${SANS};
    text-align: left;
    white-space: nowrap;
  }
  th:last-child { border-right: 0; }
  td {
    height: 15px;
    padding: 0 9px 0 2px;
    font: 13px/15px ${MONO};
    white-space: nowrap;
    vertical-align: top;
  }
`;

const Cell = styled.td<{ $align?: string }>`
  text-align: ${p => p.$align || 'left'};
`;

const StateCell = styled.td`
  && { padding: 0 0 0 2px; text-align: center; }
`;

const DataCell = styled.td`
  && { padding: 0 0 0 1px; }
`;

const Bytes = styled.div`
  display: grid;
  grid-template-columns: repeat(8, 24px);
`;

const Byte = styled.span`
  display: grid;
  grid-template-columns: 8px 8px;
`;

const Digit = styled.span<{ $hot?: boolean }>`
  height: 14px;
  line-height: 15px;
  ${p => p.$hot && css`
    color: #fff;
    background: #3b7f80;
  `}
`;

const VScroll = styled.div`
  display: flex;
  flex: none;
  flex-direction: column;
  justify-content: space-between;
  width: 17px;
  background: #f8f8f8;
`;

const TabRow = styled.div`
  display: flex;
  flex: none;
  height: 17px;
  background: #f8f8f8;
`;

const NavButton = styled.button`
  display: flex;
  align-items: center;
  justify-content: center;
  width: 17px;
  padding: 0;
  border: 0;
  border-right: 1px solid #a0a0a0;
  background: #f0f0f0;
`;

const SheetTab = styled.button<{ $on?: boolean; $w: number }>`
  width: ${p => p.$w}px;
  padding: 0;
  border: 0;
  border-bottom: 1px solid ${p => (p.$on ? '#fff' : '#a0a0a0')};
  background: ${p => (p.$on ? '#fff' : '#f0f0f0')};
  border-top: ${p => (p.$on ? 0 : 1)}px solid #000;
  font: ${p => (p.$on ? 700 : 400)} 11px/15px ${SANS};
`;

const TabEdge = styled.span`
  width: 9px;
  background: #f0f0f0;
`;

const TabFill = styled.span`
  width: 85px;
  border-top: 1px solid #000;
  background: #f0f0f0;
`;

const Splitter = styled.span`
  width: 5px;
  border: 1px solid;
  border-color: #fff #606060 #606060 #fff;
  background: #f0f0f0;
`;

const Corner = styled.span`
  width: 17px;
  background: #f0f0f0;
`;

const HThumb = styled.span`
  width: 17px;
  margin-right: auto;
  ${raised}
`;

/* An "x" in the mask marks a digit that changed since the last message. */
const MESSAGES = [
  ['42', '00:00:00.075.102.2', 'A', 'Ignition', '00 00 00 00 00 00 00 01', '.x .. .. .. .. .. .. .x'],
  ['42', '00:00:00.075.342.2', '14', 'Engine', 'D6 00 00 00 00 00 00 1E', 'xx xx .. .. .. .. .. .x'],
  ['42', '00:00:00.075.206.2', '1E', 'Gear', '00 00 02 02 00 00 00 00', '.. .. .x .x .. .. .. ..'],
  ['42', '00:00:00.075.207.1', '28', 'Vehicle speed', '00 00 00 00 20 00 20 00', '.. .. .. .. xx .. xx ..'],
  ['41', '00:00:00.075.358.2', '32', 'ABS', '01 00 00 00 00 00 00 00', '.. .. .. .. .. .. .. ..'],
  ['41', '00:00:00.075.342.2', '64', 'Operator', '00 00 00 00 00 00 00 00', '.. .. .. .. .. .. .. xx'],
  ['41', '00:00:00.075.214.2', '6E', 'Wheel info', '00 00 01 00 81 00 81 00', 'xx .. xx .. xx .. xx ..'],
];

const Receive = () => (
  <AppWindow
    place={{ x: 536, y: 500, w: 786, h: 275, edge: 5 }}
    icon="rx"
    title="CAN 1 - Receive"
    skin={{
      title: 'linear-gradient(100deg, #7f9dc2 0, #5c84b2 12%, #2a5c98 20%, #1c4d86 38%, #2a5c98 52%, #1c4f88 62%, #2b5c94 84%, #5f8cba 100%)',
      left: 'linear-gradient(#7f9dc2 0, #b4cce4 30%, #c4d8ec 33%, #24508c 34%, #4a78b0 60%, #2070b0 100%)',
      right: 'linear-gradient(#5f8cba 0, #a4c4e0 28%, #2f6cac 34%, #3c78b4 58%, #8cbce0 64%, #3c80bc 90%)',
      bottom: 'linear-gradient(90deg, #2070b0 0, #2070b0 12%, #b8dcf5 15%, #a8d0f0 60%, #c0dcf5)',
    }}
  >
    <Menu items={['&File', '&View', 'F&unctions', '&Options', '&Help']} />
    <ToolRow $h={27}>
      <ToolGroup>
        <Tools list="okOff stop | eraser eraserOk clockOk |" />
        <Combo aria-label="Filter">
          <ComboSelect defaultValue="none"><option value="none">&lt;No Filter&gt;</option></ComboSelect>
          <ComboArrow aria-hidden="true"><Arrow dir="down" /></ComboArrow>
        </Combo>
        <Tools list="filter | !watch download | !idHex !dataHex | logOff | help" />
      </ToolGroup>
    </ToolRow>
    <ReceivePane>
      <Split>
        <TableScroll>
          <MessageTable>
            <colgroup>
              <col width="60" /><col width="150" /><col width="56" /><col width="50" /><col width="50" /><col width="50" /><col width="119" /><col />
            </colgroup>
            <thead>
              <tr>{['Count', 'Cycletime', 'State', 'Timeout', 'ID (hex)', 'Length', 'Message', 'Data (hex)'].map(h => <th key={h}>{h}</th>)}</tr>
            </thead>
            <tbody>
              {MESSAGES.map(([count, time, id, name, data, mask]) => (
                <tr key={id}>
                  <Cell>{count}</Cell>
                  <Cell>{time}</Cell>
                  <StateCell>S</StateCell>
                  <Cell />
                  <Cell $align="right">{id}</Cell>
                  <Cell $align="right">8</Cell>
                  <Cell>{name}</Cell>
                  <DataCell>
                    <Bytes>
                      {data.split(' ').map((b, i) => (
                        <Byte key={i}>
                          {b.split('').map((d, j) => <Digit key={j} $hot={mask[i * 3 + j] === 'x'}>{d}</Digit>)}
                        </Byte>
                      ))}
                    </Bytes>
                  </DataCell>
                </tr>
              ))}
            </tbody>
          </MessageTable>
        </TableScroll>
        <VScroll>
          <div>
            <ScrollButton aria-label="Scroll up"><Arrow dir="up" /></ScrollButton>
            <ScrollButton as="span" />
          </div>
          <ScrollButton aria-label="Scroll down"><Arrow dir="down" /></ScrollButton>
        </VScroll>
      </Split>
      <TabRow>
        <NavButton aria-label="First sheet"><Arrow dir="first" /></NavButton>
        <NavButton aria-label="Previous sheet"><Arrow dir="left" /></NavButton>
        <NavButton aria-label="Next sheet"><Arrow dir="right" /></NavButton>
        <NavButton aria-label="Last sheet"><Arrow dir="last" /></NavButton>
        <TabEdge><svg width="9" height="17" viewBox="0 0 9 17"><path d="M2 .500h7M2.500.500l5 16" fill="none" stroke="#000" /></svg></TabEdge>
        <SheetTab $w={34}>Scroll</SheetTab>
        <TabEdge><svg width="9" height="17" viewBox="0 0 9 17"><path d="M4 0h5v17H8z" fill="#fff" /><path d="M0 .500h3l5 16M5 9l-3 7H0" fill="none" stroke="#000" /></svg></TabEdge>
        <SheetTab $w={56} $on>Overwrite</SheetTab>
        <TabEdge><svg width="9" height="17" viewBox="0 0 9 17"><path d="M0 0h7L2 17H0z" fill="#fff" /><path d="M2.500 16.500l5-16H9" fill="none" stroke="#000" /></svg></TabEdge>
        <TabFill />
        <Splitter />
        <ScrollButton aria-label="Scroll left"><Arrow dir="left" /></ScrollButton>
        <HThumb />
        <ScrollButton aria-label="Scroll right"><Arrow dir="right" /></ScrollButton>
        <Corner />
      </TabRow>
    </ReceivePane>
    <StatusBar $h={21}>
      <StatusPane $w={25}><Lamp $color="#38a848" $dark="#0c6030" /></StatusPane>
      <StatusPane $w={125}>Running</StatusPane>
      <StatusPane $w={205}>Messages Received: 291</StatusPane>
      <StatusPane $w={105}>Overruns: 0</StatusPane>
      <Grip />
    </StatusBar>
  </AppWindow>
);

export default function App() {
  return (
    <>
      <GlobalStyle />
      <Desktop>
        <DatabaseEditor />
        <Graphic />
        <ControlPanel />
        <Receive />
      </Desktop>
    </>
  );
}
